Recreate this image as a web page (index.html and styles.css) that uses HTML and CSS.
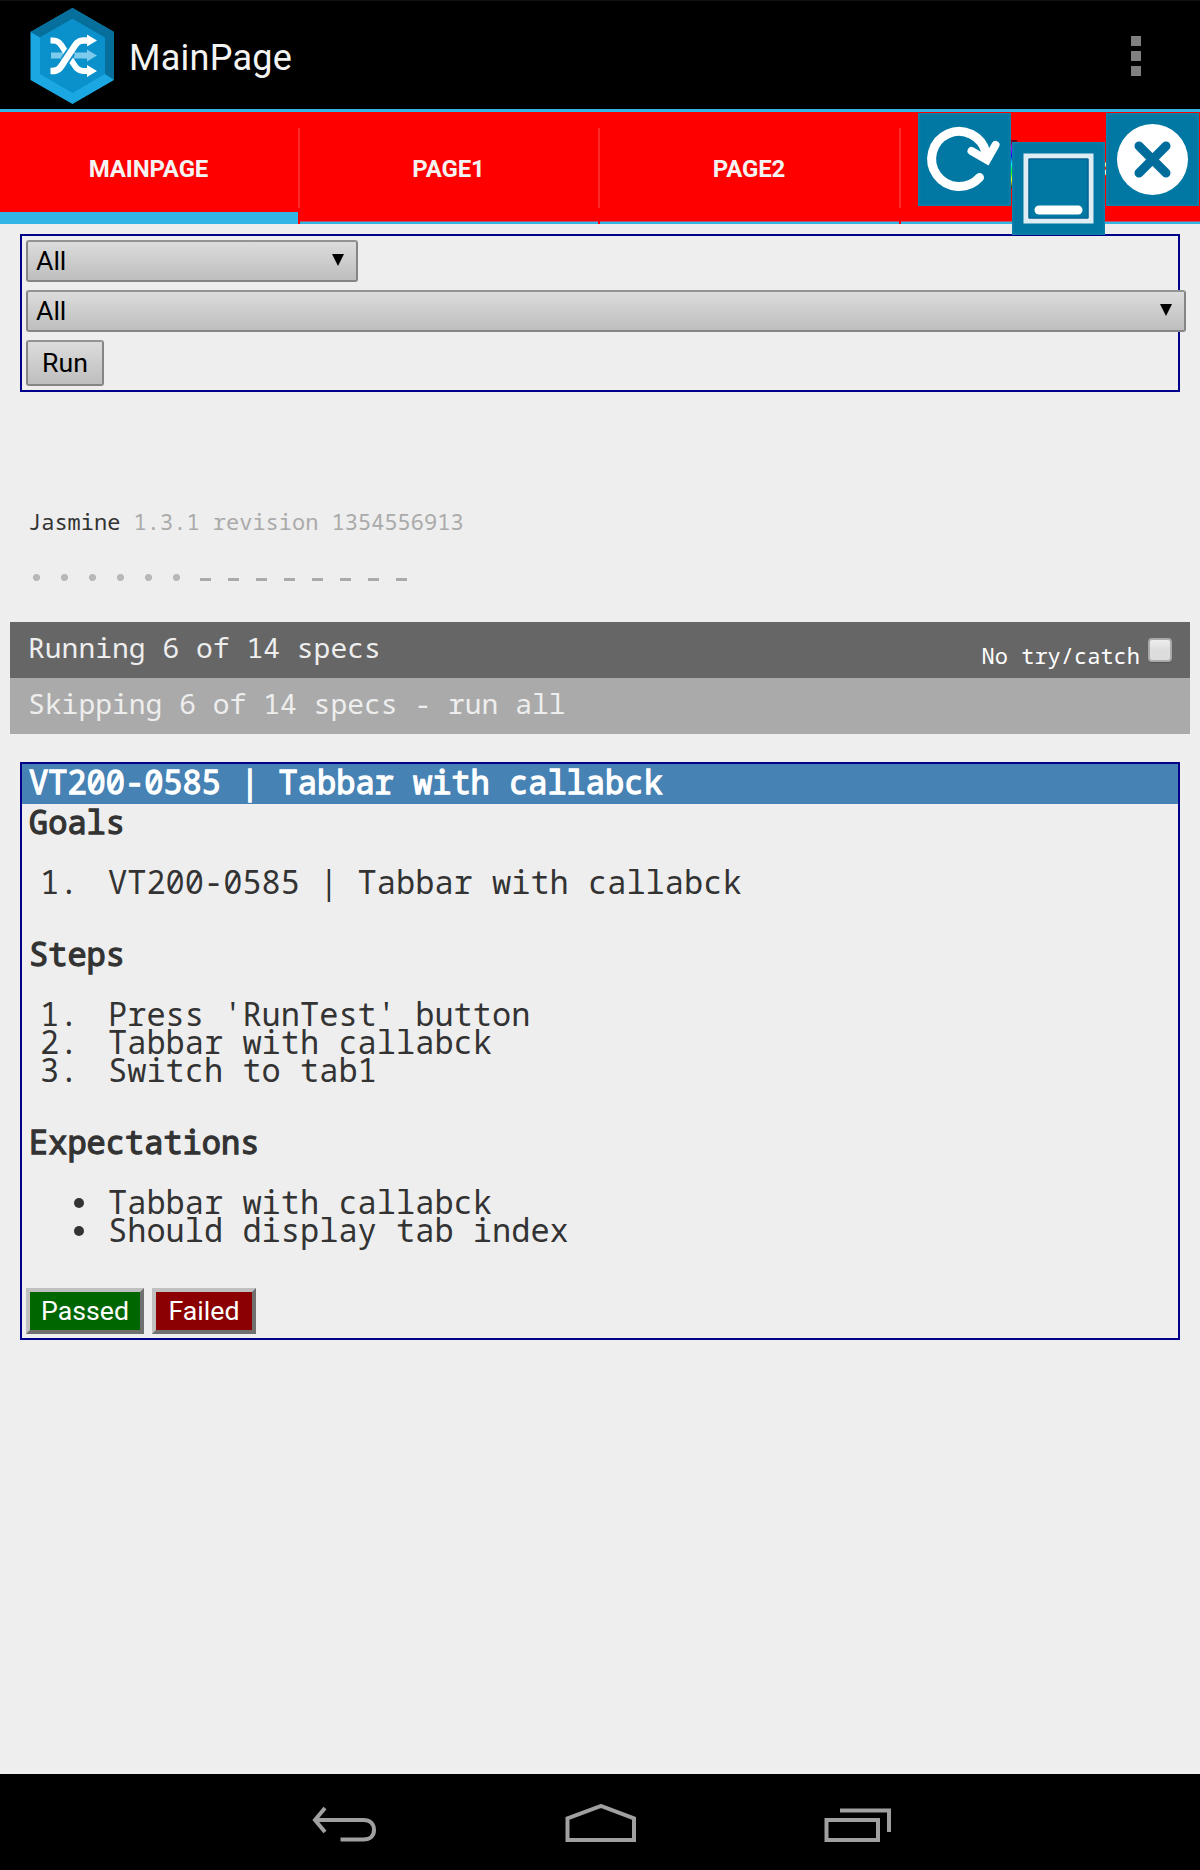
FILE: index.html
```html
<!DOCTYPE html>
<html lang="en">
<head>
<meta charset="utf-8">
<title>MainPage</title>
<link rel="stylesheet" href="styles.css">
</head>
<body>
<header class="action-bar">
  <svg class="logo" width="84" height="97" viewBox="30 7 84 97">
    <path fill="#1ba8e2" d="M72.5 8 114 32V80L72.500 104 30.500 80V32z"/>
    <path fill="#066f9b" d="M72.500 8 114 32V80L105 74V38L72.500 19 40 37.500 30.500 32z"/>
    <path fill="#0a90ca" d="M72.500 19 105 37.500V74L72.500 93 40 74V37.500z"/>
    <g fill="none" stroke-width="6">
      <path stroke="#7ccaec" d="M51 55.500h12M74 55.500h14"/>
      <path fill="#7ccaec" stroke="none" d="M87 49.500 97 55.500 87 61.500z"/>
      <path stroke="#fff" d="M50.500 40.500h2c6 0 8 3 11.500 9l8 12c4 6 6 9.500 11 9.500h5"/>
      <path stroke="#0a90ca" stroke-width="10" d="M65 60.500 71 51.500"/>
      <path stroke="#fff" stroke-width="6.500" d="M50.500 71h2c6 0 8-3 11.500-9l8-12c4-6 6-9.500 11-9.500h5"/>
    </g>
    <path fill="#fff" d="M87 34.500 97 40.500 87 46.500zM87 65 97 71 87 77z"/>
  </svg>
  <h1 class="title">MainPage</h1>
  <div class="overflow"><i></i><i></i><i></i></div>
</header>
<nav class="tabs">
  <div class="tab active">MAINPAGE</div>
  <div class="tab">PAGE1</div>
  <div class="tab">PAGE2</div>
  <div class="tab last"><span class="tab-icon"></span>PAGE3</div>
  <svg class="tool refresh" width="93" height="93" viewBox="0 0 93 93" fill="none">
    <path stroke="#fff" stroke-width="9" stroke-linecap="round" d="M61.500 64.500A27.500 27.500 0 1 1 68 40"/>
    <path stroke="#fff" stroke-width="8" stroke-linecap="round" d="M53.500 38 69 47 77.500 32"/>
  </svg>
  <svg class="tool minimize" width="93" height="93" viewBox="0 0 93 93" fill="none">
    <path stroke="#deedf3" stroke-width="5" d="M14 14H79V79H14z"/>
    <path stroke="#075787" stroke-width="1" d="M17 17H76V76H17z"/>
    <path stroke="#fff" stroke-width="9" stroke-linecap="round" d="M27 68H66"/>
  </svg>
  <svg class="tool close" width="93" height="93" viewBox="0 0 93 93" fill="none">
    <circle cx="46.500" cy="46.500" r="35.500" fill="#fff"/>
    <path stroke="#006c9c" stroke-width="9" stroke-linecap="round" d="M33 33 60 60M60 33 33 60"/>
  </svg>
</nav>
<main class="page">
  <section class="filters">
    <div class="select short"><span>All</span><svg width="12" height="12"><path d="M0 0H12L6 12z"/></svg></div>
    <div class="select wide"><span>All</span><svg width="12" height="12"><path d="M0 0H12L6 12z"/></svg></div>
    <button class="run">Run</button>
  </section>
  <section class="reporter">
    <div class="banner">Jasmine <span>1.3.1 revision 1354556913</span></div>
    <div class="symbols">
      <i class="dot"></i><i class="dot"></i><i class="dot"></i><i class="dot"></i><i class="dot"></i><i class="dot"></i><i class="dash"></i><i class="dash"></i><i class="dash"></i><i class="dash"></i><i class="dash"></i><i class="dash"></i><i class="dash"></i><i class="dash"></i>
    </div>
    <div class="bar running"><span>Running 6 of 14 specs</span><span class="exceptions">No try/catch</span><i class="checkbox"></i></div>
    <div class="bar skipping">Skipping 6 of 14 specs - run all</div>
  </section>
  <section class="spec">
    <h2 class="spec-title">VT200-0585 | Tabbar with callabck</h2>
    <h3>Goals</h3>
    <ul>
      <li><b>1.</b>VT200-0585 | Tabbar with callabck</li>
    </ul>
    <h3>Steps</h3>
    <ul>
      <li><b>1.</b>Press 'RunTest' button</li>
      <li><b>2.</b>Tabbar with callabck</li>
      <li><b>3.</b>Switch to tab1</li>
    </ul>
    <h3>Expectations</h3>
    <ul>
      <li><i></i>Tabbar with callabck</li>
      <li><i></i>Should display tab index</li>
    </ul>
    <div class="actions"><button class="passed">Passed</button><button class="failed">Failed</button></div>
  </section>
</main>
<footer class="nav-bar">
  <svg width="68" height="40" viewBox="310 1804 68 40"><path d="M316 1820H363.500C370 1820 374 1824 374 1830S370 1839.500 363.500 1839.500H340.500"/><path d="M325 1808 315 1820 325 1832"/></svg>
  <svg width="72" height="40" viewBox="564 1804 72 40"><path d="M566.500 1840V1818.500L600 1806 633 1818.500V1840z"/></svg>
  <svg width="68" height="40" viewBox="824 1804 68 40"><path d="M826.500 1820H878V1840H826.500zM840 1810.500H889V1832"/></svg>
</footer>
</body>
</html>
```
FILE: styles.css
```css
* { box-sizing: border-box; }
body {
  margin: 0;
  width: 1200px;
  height: 1870px;
  display: flex;
  flex-direction: column;
  background: #eee;
  color: #333;
  font-family: "Droid Sans Mono", "Noto Sans Mono", "DejaVu Sans Mono", monospace;
}
h1, h2, h3, ul { margin: 0; padding: 0; }
button { font-family: Roboto, sans-serif; font-size: 26.67px; line-height: 32px; padding: 0; }

.action-bar {
  height: 112px;
  display: flex;
  align-items: flex-start;
  background: #000;
  border-top: 1px solid #101010;
  border-bottom: 3px solid #33b5e5;
  padding: 6px 59px 0 30px;
}
.title {
  margin: 30px auto 0 15px;
  font: 400 36px/42px Roboto, sans-serif;
  letter-spacing: .25px;
  color: #f3f3f3;
}
.overflow { display: flex; flex-direction: column; gap: 5px; padding-top: 29px; }
.overflow i { width: 10px; height: 10px; background: #808080; }

.tabs {
  position: relative;
  height: 112px;
  display: grid;
  grid-template-columns: 298px 298px 299px 299px;
  column-gap: 2px;
  background: linear-gradient(#ff2a2a, #ff2a2a) 298px 16px / 2px 80px no-repeat,
    linear-gradient(#ff2a2a, #ff2a2a) 598px 16px / 2px 80px no-repeat,
    linear-gradient(#ff2a2a, #ff2a2a) 899px 16px / 2px 80px no-repeat, #f00;
}
.tab {
  display: flex;
  justify-content: center;
  padding: 43px 1px 0 0;
  font: 700 24px/28px Roboto, sans-serif;
  letter-spacing: -.15px;
  color: #f3f3f3;
  border-bottom: 2px solid #33b5e5;
  box-shadow: inset 0 -1px #b8566a;
}
.tab.active { border-bottom-width: 12px; box-shadow: none; }
.tab.last { justify-content: flex-start; padding-left: 104px; }
.tab-icon {
  width: 12px;
  height: 48px;
  margin: -15px 18px 0 0;
  background: linear-gradient(#600, #c0f, #00f, #0ff, #0f0, #ff0, #222);
}
.tool { position: absolute; background: #0078a3; box-shadow: inset 0 0 3px 1px #1684ab; }
.refresh { left: 918px; top: 1px; }
.minimize { left: 1012px; top: 30px; }
.close { left: 1106px; top: 1px; }

.page { flex: 1; padding-top: 10px; }
.filters {
  margin: 0 20px;
  height: 158px;
  border: 2px solid #00008b;
  padding: 4px;
  display: flex;
  flex-direction: column;
  align-items: flex-start;
  gap: 8px;
}
.select, .run {
  border: 2px solid #858585;
  border-top-color: #939393;
  border-radius: 3px;
  background: linear-gradient(#dcdcdc, #bebebe);
  color: #000;
}
.select {
  height: 42px;
  flex: none;
  display: flex;
  justify-content: space-between;
  padding: 3px 12px 0 8px;
  font: 26.67px/32px Roboto, sans-serif;
}
.select svg { margin-top: 9px; }
.short { width: 332px; }
.wide { width: 1160px; }
.run { width: 78px; height: 46px; }

.banner { margin: 109px 28px 0; font-size: 22px; line-height: 40px; }
.banner span { color: #aaa; }
.symbols { display: flex; margin: 33px 28px 41px; height: 7px; }
.symbols i { width: 28px; height: 7px; }
.dot { background: radial-gradient(circle at 8.500px 3.500px, #b8b8b8 3.200px, transparent 3.900px); }
.dash { background: linear-gradient(#aaa, #aaa) 4px 4px / 11px 3px no-repeat; }
.bar {
  height: 56px;
  margin: 0 10px;
  padding: 0 18px;
  display: flex;
  font-size: 28px;
  line-height: 50px;
  color: #eee;
}
.running { background: #666; }
.skipping { background: #aaa; }
.exceptions { margin-left: auto; font-size: 22px; line-height: 66px; color: #fff; }
.checkbox {
  width: 24px;
  height: 24px;
  margin: 16px 0 0 8px;
  border: 2px solid #aaa;
  border-radius: 4px;
  background: linear-gradient(#eee, #ddd 50%);
  box-shadow: 0 1px 1px #555;
}

.spec {
  margin: 28px 20px 0;
  height: 578px;
  border: 2px solid #00008b;
  font-size: 32px;
}
.spec h3, .spec-title {
  padding-left: 7px;
  font-size: 32px;
  font-weight: 400;
  -webkit-text-stroke: 1.3px currentColor;
}
.spec-title { height: 40px; background: #4682b4; color: #fff; line-height: 35px; }
.spec h3 { height: 32px; line-height: 35px; }
.spec ul { list-style: none; padding: 32px 0 40px 86px; line-height: 28px; }
.spec li { display: flex; }
.spec b { width: 68px; margin-left: -68px; font-weight: 400; }
.spec li i { width: 10px; height: 10px; margin: 10px 24px 0 -34px; border-radius: 50%; background: #333; }
.actions { display: flex; gap: 8px; padding-left: 4px; }
.actions button { height: 46px; border: 4px solid; border-color: #c0c0c0 #707070 #707070 #c0c0c0; color: #fff; }
.spec .actions { margin-top: 4px; }
.passed { width: 118px; background: #060; }
.failed { width: 104px; background: #8b0000; }

.nav-bar {
  height: 96px;
  display: grid;
  grid-template-columns: 68px 72px 68px;
  justify-content: space-between;
  padding: 30px 308px 0 310px;
  background: #000;
}
.nav-bar svg { fill: none; stroke: #a0a0a0; stroke-width: 4; }
```
